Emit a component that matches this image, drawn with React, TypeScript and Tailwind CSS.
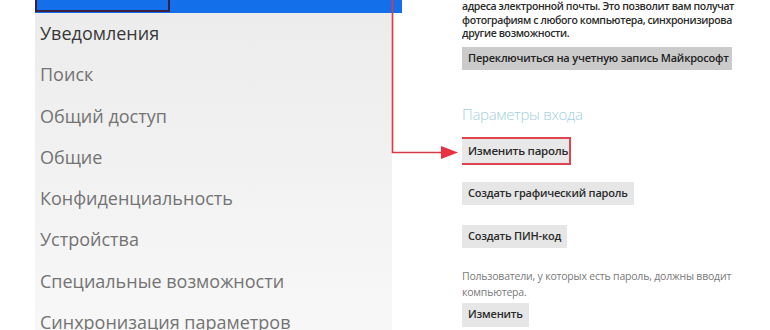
import React from "react";

const menu = [
  "Поиск",
  "Общий доступ",
  "Общие",
  "Конфиденциальность",
  "Устройства",
  "Специальные возможности",
  "Синхронизация параметров",
];

function GrayButton({ label, className }: { label: string; className?: string }) {
  return (
    <div
      className={
        "flex w-fit items-center bg-[#e6e6e6] px-[6px] text-[11px] font-semibold tracking-[-0.2px] text-[#2a2a2a] " +
        (className ?? "")
      }
    >
      {label}
    </div>
  );
}

export default function App() {
  return (
    <div className="relative flex h-[330px] w-[770px] overflow-hidden bg-white font-['Open_Sans',sans-serif]">
      {/* left margin */}
      <div className="w-[35px] shrink-0" />

      {/* settings nav */}
      <div className="flex w-[367px] shrink-0 flex-col">
        <div className="flex h-[13px] shrink-0 bg-[#1470ea]">
          <div className="h-[12px] w-[135px] border-2 border-t-0 border-[#3b1f47] bg-[#1470ea]" />
        </div>
        <div className="h-px w-[357px] bg-[#e58a90]" />
        <div className="flex w-[357px] flex-1 flex-col bg-gradient-to-b from-[#ececec] to-[#f8f8f8] pl-[5px]">
          <div className="text-[18px] leading-[41.3px] text-[#383838]">Уведомления</div>
          {menu.map((m) => (
            <div key={m} className="text-[18px] leading-[41.3px] text-[#737373]">
              {m}
            </div>
          ))}
        </div>
      </div>

      {/* account content */}
      <div className="ml-[60px] flex w-[274px] shrink-0 flex-col overflow-hidden">
        <div className="whitespace-nowrap text-[10.5px] font-semibold leading-[13.5px] tracking-[-0.38px] text-[#2c2c2c]">
          <div>адреса электронной почты. Это позволит вам получат</div>
          <div>фотографиям с любого компьютера, синхронизирова</div>
          <div>другие возможности.</div>
        </div>
        <div className="mt-[6px] flex h-[23px] w-[270px] items-center whitespace-nowrap bg-[#cbcbcb] px-[6px] text-[11px] font-semibold tracking-[-0.2px] text-[#222]">
          Переключиться на учетную запись Майкрософт
        </div>

        <div className="mt-[34px] text-[15px] font-light leading-[20px] tracking-[-0.3px] text-[#a3cfe0]">
          Параметры входа
        </div>

        <div className="ml-[-3px] mt-[13px] flex h-[28px] w-[112px] items-center whitespace-nowrap border-2 border-[#e0454f] bg-[#e8e8e8] px-[7px] text-[11.5px] font-semibold tracking-[-0.25px] text-[#2a2a2a]">
          Изменить пароль
        </div>

        <GrayButton label="Создать графический пароль" className="mt-[17px] h-[23px]" />
        <GrayButton label="Создать ПИН-код" className="mt-[20px] h-[23px]" />

        <div className="mt-[20px] whitespace-nowrap text-[10.5px] leading-[16px] tracking-[-0.2px] text-[#7a7a7a]">
          <div>Пользователи, у которых есть пароль, должны вводит</div>
          <div>компьютера.</div>
        </div>
        <GrayButton label="Изменить" className="mt-[3px] h-[24px]" />
      </div>

      {/* red annotation arrow */}
      <svg className="pointer-events-none absolute left-0 top-0" width="770" height="330">
        <polyline points="392.5,0 392.5,152.5 443,152.5" fill="none" stroke="#d93a44" strokeWidth="1.6" />
        <polygon points="441,146 458,152.5 441,159" fill="#e8323f" />
      </svg>
    </div>
  );
}
